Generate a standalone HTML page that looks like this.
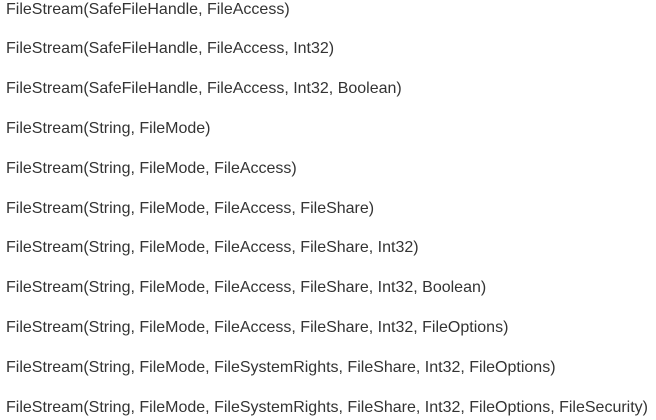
<!DOCTYPE html>
<html><head><style>
body{margin:0;background:#fff;font-family:"Liberation Sans",sans-serif;font-size:16px;color:#333;}
.l{position:absolute;left:6px;white-space:nowrap;line-height:18px;}
</style></head><body>
<div class="l" style="top:1px">FileStream(SafeFileHandle, FileAccess)</div>
<div class="l" style="top:40px">FileStream(SafeFileHandle, FileAccess, Int32)</div>
<div class="l" style="top:80px">FileStream(SafeFileHandle, FileAccess, Int32, Boolean)</div>
<div class="l" style="top:120px">FileStream(String, FileMode)</div>
<div class="l" style="top:160px">FileStream(String, FileMode, FileAccess)</div>
<div class="l" style="top:200px">FileStream(String, FileMode, FileAccess, FileShare)</div>
<div class="l" style="top:239px">FileStream(String, FileMode, FileAccess, FileShare, Int32)</div>
<div class="l" style="top:279px">FileStream(String, FileMode, FileAccess, FileShare, Int32, Boolean)</div>
<div class="l" style="top:319px">FileStream(String, FileMode, FileAccess, FileShare, Int32, FileOptions)</div>
<div class="l" style="top:359px">FileStream(String, FileMode, FileSystemRights, FileShare, Int32, FileOptions)</div>
<div class="l" style="top:399px">FileStream(String, FileMode, FileSystemRights, FileShare, Int32, FileOptions, FileSecurity)</div>
</body></html>
